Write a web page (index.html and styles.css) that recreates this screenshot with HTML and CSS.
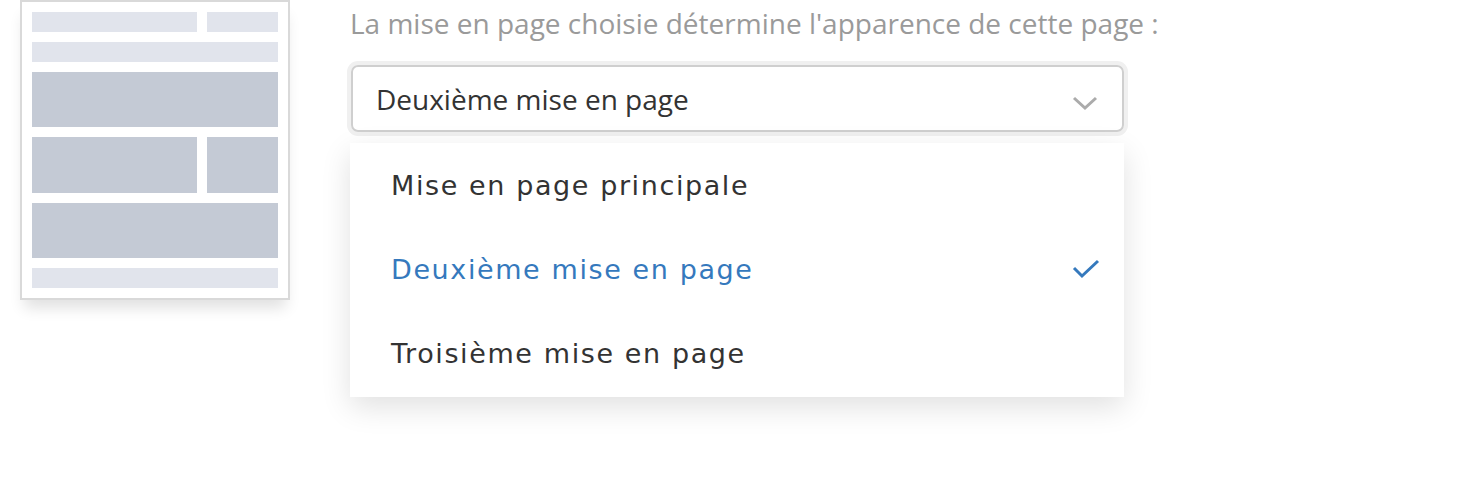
FILE: index.html
```html
<!DOCTYPE html>
<html lang="fr">
<head>
<meta charset="utf-8">
<title>Mise en page</title>
<link rel="stylesheet" href="styles.css">
</head>
<body>
<div class="page">
  <div class="thumb">
    <div class="blk light"></div>
    <div class="blk light"></div>
    <div class="blk light full"></div>
    <div class="blk dark full"></div>
    <div class="blk dark"></div>
    <div class="blk dark"></div>
    <div class="blk dark full"></div>
    <div class="blk light full"></div>
  </div>
  <div class="main">
    <p class="label">La mise en page choisie détermine l'apparence de cette page :</p>
    <div class="select">
      <span class="select-value">Deuxième mise en page</span>
      <svg class="chev" width="26" height="16" viewBox="0 0 26 16"><path d="M2 3 L13 13 L24 3" fill="none" stroke="#ababab" stroke-width="3"/></svg>
    </div>
    <ul class="menu">
      <li class="item">Mise en page principale</li>
      <li class="item active">Deuxième mise en page
        <svg class="check" width="28" height="20" viewBox="0 0 28 20"><path d="M2 9 L10 17 L26 2" fill="none" stroke="#3579bd" stroke-width="3"/></svg>
      </li>
      <li class="item">Troisième mise en page</li>
    </ul>
  </div>
</div>
</body>
</html>
```
FILE: styles.css
```css
html, body {
  margin: 0;
  padding: 0;
  background: #ffffff;
}
body {
  min-height: 490px;
}
.page {
  display: flex;
  align-items: flex-start;
  padding-left: 20px;
  gap: 60px;
  padding-bottom: 60px;
}
.thumb {
  box-sizing: border-box;
  flex: none;
  width: 270px;
  height: 300px;
  border: 2px solid #d9d9d9;
  padding: 10px;
  background: #fff;
  display: grid;
  grid-template-columns: 165px 71px;
  grid-template-rows: 20px 20px 55px 56px 55px 20px;
  gap: 10px;
  box-shadow: 0 12px 14px -4px rgba(0, 0, 0, 0.12);
}
.blk.full { grid-column: 1 / 3; }
.light { background: #e1e4ec; }
.dark { background: #c4cad5; }
.main {
  width: 774px;
  display: flex;
  flex-direction: column;
}
.label {
  margin: 0;
  font-family: "Open Sans", sans-serif;
  font-size: 28px;
  line-height: 46px;
  color: #9a9a9a;
  height: 49px;
  white-space: nowrap;
}
.select {
  box-sizing: border-box;
  height: 67px;
  margin-top: 16px;
  margin-left: 1px;
  width: 773px;
  border: 2px solid #cfcfcf;
  border-radius: 7px;
  box-shadow: 0 0 0 4px #f0f0f0;
  display: flex;
  align-items: center;
  justify-content: space-between;
  padding: 0 24px 0 23px;
  font-family: "Open Sans", sans-serif;
  font-size: 28px;
  color: #333;
}
.chev { margin-top: 8px; }
.menu {
  list-style: none;
  margin: 11px 0 0 0;
  width: 774px;
  background: #fff;
  box-shadow: 0 10px 28px rgba(0, 0, 0, 0.12);
  padding: 0 0 2px;
}
.item {
  height: 84px;
  display: flex;
  align-items: center;
  justify-content: space-between;
  padding: 0 24px 0 41px;
  font-family: "DejaVu Sans", sans-serif;
  font-size: 27px;
  letter-spacing: 1.6px;
  color: #333;
}
.item.active { color: #3579bd; }
```
